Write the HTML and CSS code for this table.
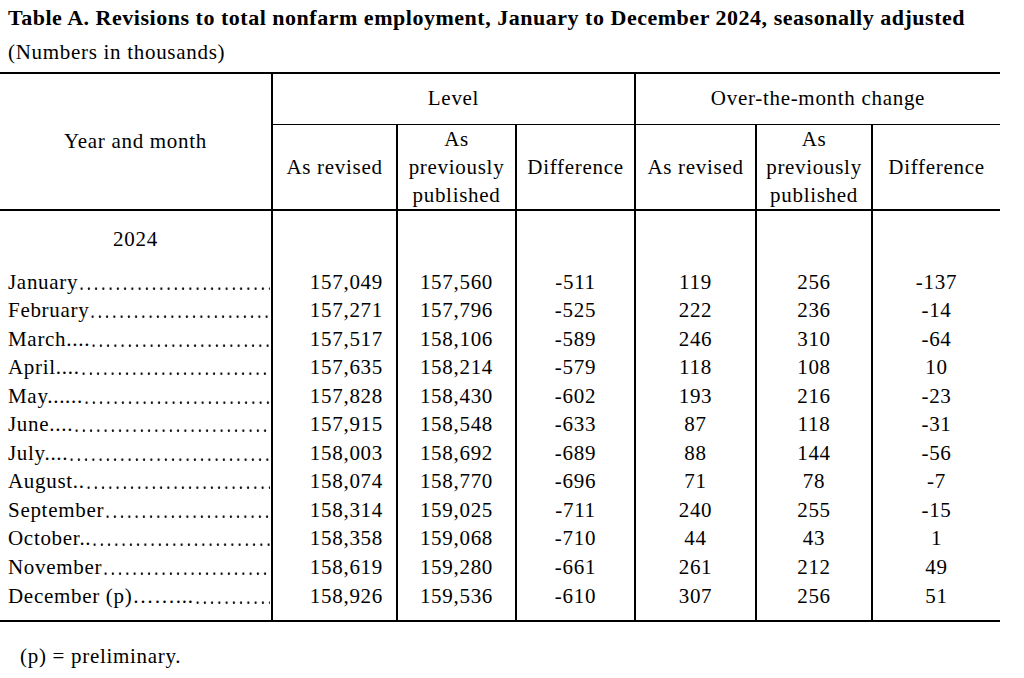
FILE: index.html
```html
<!DOCTYPE html>
<html lang="en">
<head>
<meta charset="utf-8">
<title>Table A. Revisions to total nonfarm employment</title>
<link rel="stylesheet" href="styles.css">
</head>
<body>
<h1 class="title">Table A. Revisions to total nonfarm employment, January to December 2024, seasonally adjusted</h1>
<p class="units">(Numbers in thousands)</p>
<table class="rev">
  <colgroup>
    <col class="c-label">
    <col class="c-a">
    <col class="c-b">
    <col class="c-c">
    <col class="c-d">
    <col class="c-e">
    <col class="c-f">
  </colgroup>
  <thead>
    <tr class="h-top">
      <th rowspan="2" class="ym">Year and month</th>
      <th colspan="3" class="grp grp-left">Level</th>
      <th colspan="3" class="grp">Over-the-month change</th>
    </tr>
    <tr class="h-sub">
      <th>As revised</th>
      <th class="stack">As<br>previously<br>published</th>
      <th class="grp-end">Difference</th>
      <th>As revised</th>
      <th class="stack">As<br>previously<br>published</th>
      <th class="last">Difference</th>
    </tr>
  </thead>
  <tbody>
    <tr class="year-row">
      <td class="year">2024</td><td></td><td></td><td class="grp-end"></td><td></td><td></td><td class="last"></td>
    </tr>
    <tr><td class="lbl"><div class="lead-wrap"><span class="name">January</span><span class="dots"></span></div></td><td class="num-r">157,049</td><td>157,560</td><td class="grp-end">-511</td><td>119</td><td>256</td><td class="last">-137</td></tr>
    <tr><td class="lbl"><div class="lead-wrap"><span class="name">February</span><span class="dots"></span></div></td><td class="num-r">157,271</td><td>157,796</td><td class="grp-end">-525</td><td>222</td><td>236</td><td class="last">-14</td></tr>
    <tr><td class="lbl"><div class="lead-wrap"><span class="name">March....</span><span class="dots"></span></div></td><td class="num-r">157,517</td><td>158,106</td><td class="grp-end">-589</td><td>246</td><td>310</td><td class="last">-64</td></tr>
    <tr><td class="lbl"><div class="lead-wrap"><span class="name">April....</span><span class="dots"></span></div></td><td class="num-r">157,635</td><td>158,214</td><td class="grp-end">-579</td><td>118</td><td>108</td><td class="last">10</td></tr>
    <tr><td class="lbl"><div class="lead-wrap"><span class="name">May......</span><span class="dots"></span></div></td><td class="num-r">157,828</td><td>158,430</td><td class="grp-end">-602</td><td>193</td><td>216</td><td class="last">-23</td></tr>
    <tr><td class="lbl"><div class="lead-wrap"><span class="name">June....</span><span class="dots"></span></div></td><td class="num-r">157,915</td><td>158,548</td><td class="grp-end">-633</td><td>87</td><td>118</td><td class="last">-31</td></tr>
    <tr><td class="lbl"><div class="lead-wrap"><span class="name">July....</span><span class="dots"></span></div></td><td class="num-r">158,003</td><td>158,692</td><td class="grp-end">-689</td><td>88</td><td>144</td><td class="last">-56</td></tr>
    <tr><td class="lbl"><div class="lead-wrap"><span class="name">August..</span><span class="dots"></span></div></td><td class="num-r">158,074</td><td>158,770</td><td class="grp-end">-696</td><td>71</td><td>78</td><td class="last">-7</td></tr>
    <tr><td class="lbl"><div class="lead-wrap"><span class="name">September</span><span class="dots"></span></div></td><td class="num-r">158,314</td><td>159,025</td><td class="grp-end">-711</td><td>240</td><td>255</td><td class="last">-15</td></tr>
    <tr><td class="lbl"><div class="lead-wrap"><span class="name">October..</span><span class="dots"></span></div></td><td class="num-r">158,358</td><td>159,068</td><td class="grp-end">-710</td><td>44</td><td>43</td><td class="last">1</td></tr>
    <tr><td class="lbl"><div class="lead-wrap"><span class="name">November</span><span class="dots"></span></div></td><td class="num-r">158,619</td><td>159,280</td><td class="grp-end">-661</td><td>261</td><td>212</td><td class="last">49</td></tr>
    <tr class="final"><td class="lbl"><div class="lead-wrap"><span class="name">December (p)……...</span><span class="dots"></span></div></td><td class="num-r">158,926</td><td>159,536</td><td class="grp-end">-610</td><td>307</td><td>256</td><td class="last">51</td></tr>
  </tbody>
</table>
<p class="note">(p) = preliminary.</p>
</body>
</html>
```
FILE: styles.css
```css
body {
  margin: 0;
  background: #fff;
  color: #000;
  font-family: "Liberation Serif", "Times New Roman", serif;
}

.title {
  margin: 2px 0 0 8px;
  font-size: 22px;
  font-weight: bold;
  line-height: 32px;
  letter-spacing: 0.52px;
  white-space: nowrap;
}

.units {
  margin: 4px 0 0 8px;
  font-size: 21px;
  line-height: 28px;
  letter-spacing: 0.7px;
}

.rev {
  margin-top: 6px;
  width: 1000px;
  table-layout: fixed;
  border-collapse: collapse;
  font-size: 21px;
  letter-spacing: 0.7px;
  border-top: 2px solid #000;
  border-bottom: 2px solid #000;
}

.c-label { width: 272px; }
.c-a { width: 125px; }
.c-b { width: 119px; }
.c-c { width: 119px; }
.c-d { width: 121px; }
.c-e { width: 116px; }
.c-f { width: 128px; }

.rev th,
.rev td {
  padding: 0;
  font-weight: normal;
  text-align: center;
  vertical-align: middle;
  border-right: 2px solid #000;
}

.rev th.last,
.rev td.last {
  border-right: none;
}

.h-top {
  height: 51px;
}

.h-top .grp {
  border-bottom: 1px solid #000;
}

.h-top .grp:last-child {
  border-right: none;
}

.ym {
  border-bottom: 2px solid #000;
}

.h-sub {
  height: 85px;
}

.h-sub th {
  border-bottom: 2px solid #000;
  line-height: 28px;
}

.year-row {
  height: 58px;
}

.rev td.year {
  text-align: center;
}

.rev tbody tr {
  line-height: 28.55px;
}

.rev td.num-r {
  text-align: right;
  padding-right: 13px;
}

.rev tr.final td {
  padding-bottom: 10px;
}

.rev td.lbl {
  text-align: left;
  padding-left: 8px;
  padding-right: 1px;
}

.lead-wrap {
  display: flex;
  white-space: nowrap;
}

.name {
  flex: none;
}

.dots {
  flex: 1;
  min-width: 0;
  align-self: stretch;
  background-image: radial-gradient(circle at 3.6px 20.6px, #111 0.95px, rgba(0, 0, 0, 0) 1.45px);
  background-size: 7.25px 100%;
  background-repeat: repeat-x;
}

.note {
  margin: 20px 0 0 20px;
  font-size: 21px;
  line-height: 28px;
  letter-spacing: 0.7px;
}
```
